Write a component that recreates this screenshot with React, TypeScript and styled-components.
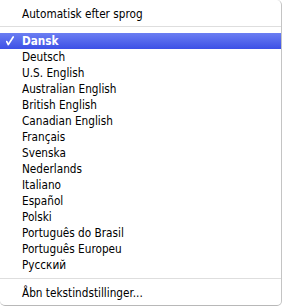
import React from 'react';
import styled, { createGlobalStyle } from 'styled-components';

const GlobalStyle = createGlobalStyle`
  html, body {
    margin: 0;
    padding: 0;
    background: #ffffff;
  }
  body {
    font-family: 'DejaVu Sans Condensed', 'Liberation Sans', sans-serif;
  }
`;

const Menu = styled.div`
  box-sizing: border-box;
  width: 282px;
  height: 306px;
  background: #ffffff;
  border-right: 1px solid #c4c4c4;
  border-bottom: 1px solid #b8b8b8;
  border-top-right-radius: 5px;
  border-bottom-right-radius: 5px;
  border-bottom-left-radius: 5px;
  padding-top: 6px;
  display: flex;
  flex-direction: column;
  overflow: hidden;
`;

const Item = styled.div<{ $selected?: boolean }>`
  position: relative;
  height: 16px;
  line-height: 16px;
  padding-left: 22px;
  font-size: 11.7px;
  color: ${p => (p.$selected ? '#ffffff' : '#000000')};
  font-weight: ${p => (p.$selected ? 'bold' : 'normal')};
  background: ${p =>
    p.$selected ? 'linear-gradient(#6b7ef2, #3c50e6)' : 'transparent'};
  white-space: nowrap;
`;

const Check = styled.svg`
  position: absolute;
  left: 6px;
  top: 3px;
`;

const Separator = styled.div<{ $above: number; $below: number }>`
  height: 1px;
  background: #dedede;
  margin: ${p => p.$above}px 0 ${p => p.$below}px;
`;

const languages = [
  'Dansk',
  'Deutsch',
  'U.S. English',
  'Australian English',
  'British English',
  'Canadian English',
  'Français',
  'Svenska',
  'Nederlands',
  'Italiano',
  'Español',
  'Polski',
  'Português do Brasil',
  'Português Europeu',
  'Русский',
];

const CheckMark = () => (
  <Check width="8" height="10" viewBox="0 0 8 10">
    <path
      d="M0.8 5.6 L2.3 8.6 L7.2 1"
      fill="none"
      stroke="#ffffff"
      strokeWidth="1.7"
      strokeLinecap="round"
      strokeLinejoin="round"
    />
  </Check>
);

export default function App() {
  return (
    <>
      <GlobalStyle />
      <Menu>
        <Item>Automatisk efter sprog</Item>
        <Separator $above={4} $below={6} />
        {languages.map(lang => (
          <Item key={lang} $selected={lang === 'Dansk'}>
            {lang === 'Dansk' && <CheckMark />}
            {lang}
          </Item>
        ))}
        <Separator $above={5} $below={6} />
        <Item>Åbn tekstindstillinger...</Item>
      </Menu>
    </>
  );
}
